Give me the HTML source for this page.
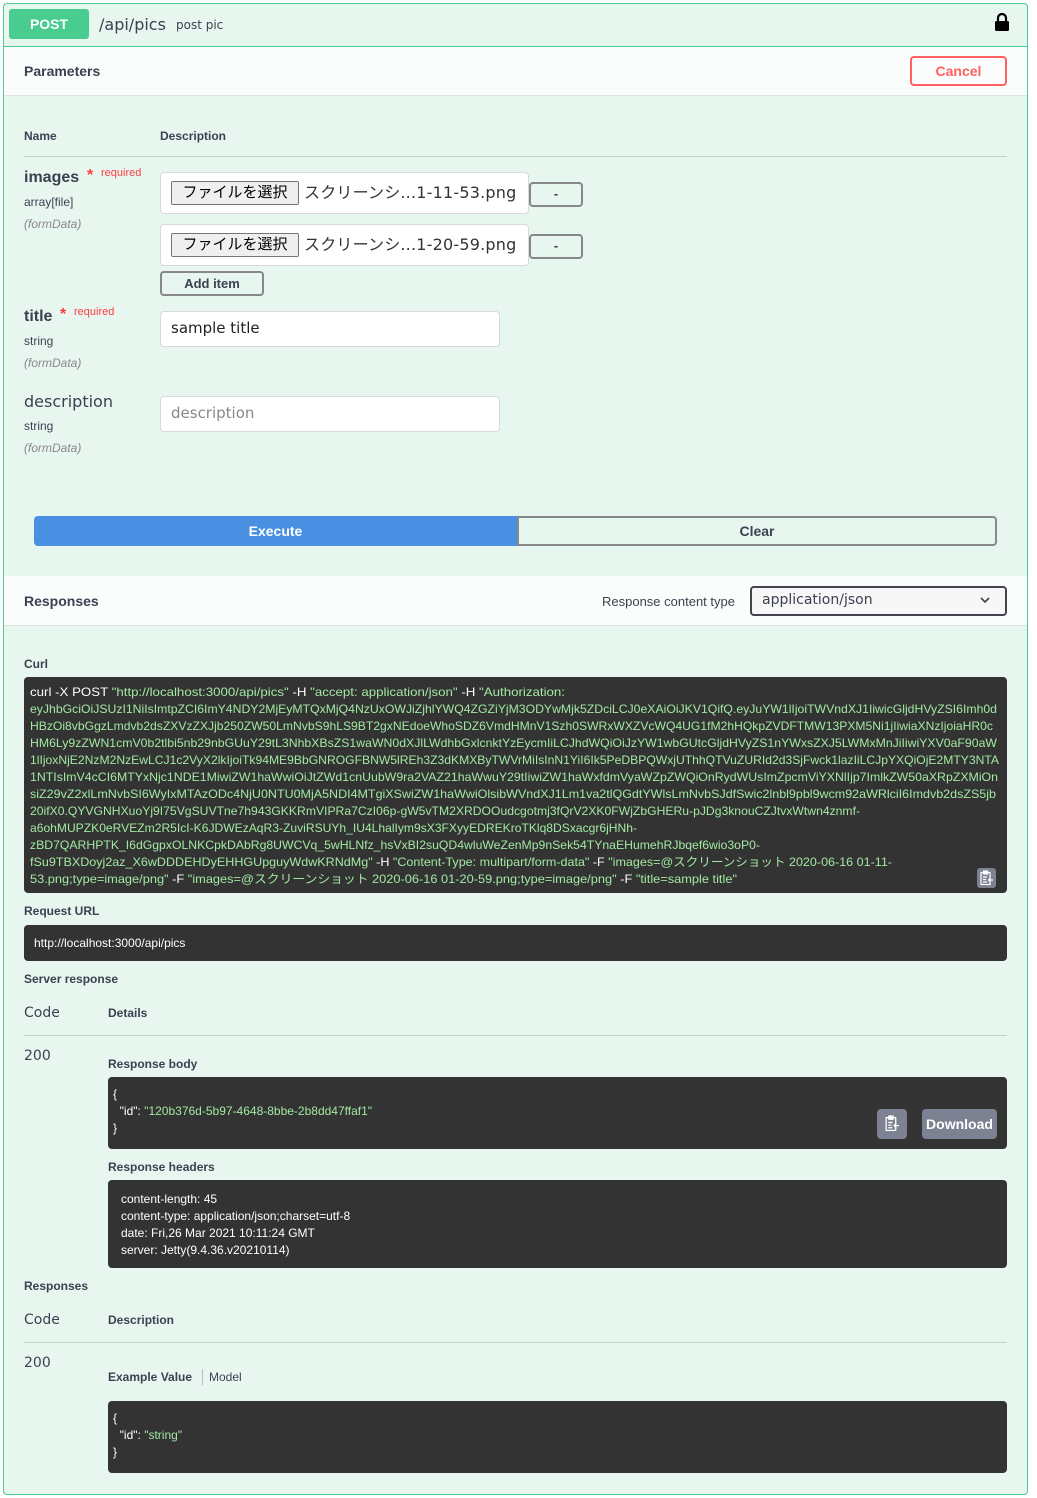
<!DOCTYPE html>
<html><head><meta charset="utf-8"><style>
*{margin:0;padding:0;box-sizing:border-box}
body{width:1037px;height:1498px;background:#fff;position:relative;overflow:hidden;font-family:"Liberation Sans","Noto Sans CJK JP",sans-serif;color:#3b4151}
.a{position:absolute}
.t{position:absolute;white-space:nowrap;line-height:1}
.b{font-weight:bold}
.dv{font-family:"DejaVu Sans","Noto Sans CJK JP",sans-serif}
.dark{position:absolute;background:#333;border-radius:4px}
.inp{position:absolute;background:#fff;border:1px solid #d9d9d9;border-radius:4px}
.gbtn{position:absolute;border:2px solid #888;border-radius:4px;text-align:center;font-size:13px;font-weight:bold;color:#3b4151}
.line{position:absolute;height:1px;background:#c5d3cd}
</style></head><body>
<div class="a" style="left:3px;top:3px;width:1025px;height:1492px;border:1px solid #49cc90;border-radius:4px;background:#e8f6f0"></div>
<div class="a" style="left:4px;top:46px;width:1023px;height:1px;background:#49cc90"></div>
<div class="a" style="left:9px;top:9px;width:80px;height:30px;background:#49cc90;border-radius:3px;color:#fff;font-weight:bold;font-size:14px;text-align:center;line-height:30px">POST</div>
<div class="t dv" style="left:99px;top:17px;font-size:16px;color:#3b4151">/api/pics</div>
<div class="t dv" style="left:176px;top:19px;font-size:12px;color:#3b4151">post pic</div>
<svg class="a" style="left:994px;top:12px" width="16" height="20" viewBox="0 0 16 20"><path d="M4 9V6a4 4 0 0 1 8 0v3" fill="none" stroke="#000" stroke-width="2.2"/><rect x="1" y="9" width="14" height="10" rx="1.5" fill="#000"/></svg>
<div class="a" style="left:4px;top:47px;width:1023px;height:49px;background:#fbfdfc;border-bottom:1px solid #dde5e1"></div>
<div class="t b" style="left:24px;top:64px;font-size:14px">Parameters</div>
<div class="a" style="left:910px;top:56px;width:97px;height:30px;border:2px solid #ff6060;border-radius:4px;color:#ff6060;font-size:14px;font-weight:bold;text-align:center;line-height:26px">Cancel</div>
<div class="t b" style="left:24px;top:130px;font-size:12px">Name</div>
<div class="t b" style="left:160px;top:130px;font-size:12px">Description</div>
<div class="line" style="left:24px;top:156px;width:983px"></div>
<div class="t b" style="left:24px;top:170px;font-size:16px">images</div>
<div class="t b" style="left:87px;top:168px;font-size:16px;color:#f93e3e">*</div>
<div class="t" style="left:101px;top:168px;font-size:11px;color:#f93e3e">required</div>
<div class="t" style="left:24px;top:196px;font-size:12px">array[file]</div>
<div class="t" style="left:24px;top:218px;font-size:12px;font-style:italic;color:#888">(formData)</div>
<div class="inp" style="left:160px;top:172px;width:369px;height:42px"></div>
<div class="a" style="left:171px;top:181px;width:128px;height:24px;background:#efefef;border:1px solid #767676;border-radius:2px;font-size:15px;line-height:22px;text-align:center;color:#000">ファイルを選択</div>
<div class="t dv" style="left:304px;top:185px;font-size:16px;color:#333;letter-spacing:0.2px">スクリーンシ...1-11-53.png</div>
<div class="gbtn" style="left:529px;top:182px;width:54px;height:25px;line-height:20px">-</div>
<div class="inp" style="left:160px;top:224px;width:369px;height:42px"></div>
<div class="a" style="left:171px;top:233px;width:128px;height:24px;background:#efefef;border:1px solid #767676;border-radius:2px;font-size:15px;line-height:22px;text-align:center;color:#000">ファイルを選択</div>
<div class="t dv" style="left:304px;top:237px;font-size:16px;color:#333;letter-spacing:0.2px">スクリーンシ...1-20-59.png</div>
<div class="gbtn" style="left:529px;top:234px;width:54px;height:25px;line-height:20px">-</div>
<div class="gbtn" style="left:160px;top:271px;width:104px;height:25px;line-height:21px">Add item</div>
<div class="t b" style="left:24px;top:309px;font-size:16px">title</div>
<div class="t b" style="left:60px;top:307px;font-size:16px;color:#f93e3e">*</div>
<div class="t" style="left:74px;top:307px;font-size:11px;color:#f93e3e">required</div>
<div class="t" style="left:24px;top:335px;font-size:12px">string</div>
<div class="t" style="left:24px;top:357px;font-size:12px;font-style:italic;color:#888">(formData)</div>
<div class="inp" style="left:160px;top:311px;width:340px;height:36px"></div>
<div class="t dv" style="left:171px;top:321px;font-size:15px;color:#222">sample title</div>
<div class="t dv" style="left:24px;top:394px;font-size:16px">description</div>
<div class="t" style="left:24px;top:420px;font-size:12px">string</div>
<div class="t" style="left:24px;top:442px;font-size:12px;font-style:italic;color:#888">(formData)</div>
<div class="inp" style="left:160px;top:396px;width:340px;height:36px"></div>
<div class="t dv" style="left:171px;top:406px;font-size:15px;color:#888">description</div>
<div class="a" style="left:34px;top:516px;width:483px;height:30px;background:#4990e2;border-radius:4px 0 0 4px;color:#fff;font-size:14px;font-weight:bold;text-align:center;line-height:30px">Execute</div>
<div class="a" style="left:517px;top:516px;width:480px;height:30px;border:2px solid #888;border-radius:0 4px 4px 0;font-size:14px;font-weight:bold;text-align:center;line-height:26px">Clear</div>
<div class="a" style="left:4px;top:576px;width:1023px;height:50px;background:#fbfdfc;border-bottom:1px solid #dde5e1"></div>
<div class="t b" style="left:24px;top:594px;font-size:14px">Responses</div>
<div class="t" style="left:602px;top:595px;font-size:13px">Response content type</div>
<div class="a" style="left:750px;top:586px;width:257px;height:30px;border:2px solid #41444e;border-radius:4px;background:#f7f7f7"></div>
<div class="t dv" style="left:762px;top:593px;font-size:14px">application/json</div>
<svg class="a" style="left:980px;top:597px" width="10" height="7" viewBox="0 0 10 7"><path d="M1 1l4 4 4-4" fill="none" stroke="#3b4151" stroke-width="1.6"/></svg>
<div class="t b" style="left:24px;top:658px;font-size:12px">Curl</div>
<div class="dark" style="left:24px;top:677px;width:983px;height:216px"></div>
<svg class="a" style="left:24px;top:677px" width="983" height="216" font-family="Liberation Sans, Noto Sans CJK JP, sans-serif" font-size="12" fill="#a2e8a2">
<text x="6" y="19" textLength="535" lengthAdjust="spacingAndGlyphs"><tspan fill="#fff">curl -X POST </tspan>"http://localhost:3000/api/pics"<tspan fill="#fff"> -H </tspan> "accept: application/json"<tspan fill="#fff"> -H </tspan> "Authorization:</text>
<text x="6" y="36" textLength="967" lengthAdjust="spacingAndGlyphs">eyJhbGciOiJSUzI1NiIsImtpZCI6ImY4NDY2MjEyMTQxMjQ4NzUxOWJiZjhlYWQ4ZGZiYjM3ODYwMjk5ZDciLCJ0eXAiOiJKV1QifQ.eyJuYW1lIjoiTWVndXJ1IiwicGljdHVyZSI6Imh0d</text>
<text x="6" y="53" textLength="963" lengthAdjust="spacingAndGlyphs">HBzOi8vbGgzLmdvb2dsZXVzZXJjb250ZW50LmNvbS9hLS9BT2gxNEdoeWhoSDZ6VmdHMnV1Szh0SWRxWXZVcWQ4UG1fM2hHQkpZVDFTMW13PXM5Ni1jIiwiaXNzIjoiaHR0c</text>
<text x="6" y="70" textLength="967" lengthAdjust="spacingAndGlyphs">HM6Ly9zZWN1cmV0b2tlbi5nb29nbGUuY29tL3NhbXBsZS1waWN0dXJlLWdhbGxlcnktYzEycmIiLCJhdWQiOiJzYW1wbGUtcGljdHVyZS1nYWxsZXJ5LWMxMnJiIiwiYXV0aF90aW</text>
<text x="6" y="87" textLength="969" lengthAdjust="spacingAndGlyphs">1lIjoxNjE2NzM2NzEwLCJ1c2VyX2lkIjoiTk94ME9BbGNROGFBNW5lREh3Z3dKMXByTWVrMiIsInN1YiI6Ik5PeDBPQWxjUThhQTVuZURId2d3SjFwck1lazIiLCJpYXQiOjE2MTY3NTA</text>
<text x="6" y="104" textLength="968" lengthAdjust="spacingAndGlyphs">1NTIsImV4cCI6MTYxNjc1NDE1MiwiZW1haWwiOiJtZWd1cnUubW9ra2VAZ21haWwuY29tIiwiZW1haWxfdmVyaWZpZWQiOnRydWUsImZpcmViYXNlIjp7ImlkZW50aXRpZXMiOn</text>
<text x="6" y="121" textLength="966" lengthAdjust="spacingAndGlyphs">siZ29vZ2xlLmNvbSI6WyIxMTAzODc4NjU0NTU0MjA5NDI4MTgiXSwiZW1haWwiOlsibWVndXJ1Lm1va2tlQGdtYWlsLmNvbSJdfSwic2lnbl9pbl9wcm92aWRlciI6Imdvb2dsZS5jb</text>
<text x="6" y="138" textLength="830" lengthAdjust="spacingAndGlyphs">20ifX0.QYVGNHXuoYj9I75VgSUVTne7h943GKKRmVIPRa7CzI06p-gW5vTM2XRDOOudcgotmj3fQrV2XK0FWjZbGHERu-pJDg3knouCZJtvxWtwn4znmf-</text>
<text x="6" y="155" textLength="607" lengthAdjust="spacingAndGlyphs">a6ohMUPZK0eRVEZm2R5IcI-K6JDWEzAqR3-ZuviRSUYh_IU4LhalIym9sX3FXyyEDREKroTKlq8DSxacgr6jHNh-</text>
<text x="6" y="172" textLength="730" lengthAdjust="spacingAndGlyphs">zBD7QARHPTK_I6dGgpxOLNKCpkDAbRg8UWCVq_5wHLNfz_hsVxBI2suQD4wluWeZenMp9nSek54TYnaEHumehRJbqef6wio3oP0-</text>
<text x="6" y="189" textLength="862" lengthAdjust="spacingAndGlyphs">fSu9TBXDoyj2az_X6wDDDEHDyEHHGUpguyWdwKRNdMg"<tspan fill="#fff"> -H </tspan> "Content-Type: multipart/form-data"<tspan fill="#fff"> -F </tspan>"images=@スクリーンショット 2020-06-16 01-11-</text>
<text x="6" y="206" textLength="707" lengthAdjust="spacingAndGlyphs">53.png;type=image/png"<tspan fill="#fff"> -F </tspan>"images=@スクリーンショット 2020-06-16 01-20-59.png;type=image/png"<tspan fill="#fff"> -F </tspan>"title=sample title"</text>
</svg>
<div class="a" style="left:977px;top:868px;width:19px;height:20px;background:#7d8293;border-radius:3px"></div>
<svg class="a" style="left:979px;top:870px" width="15" height="16" viewBox="0 0 15 16" fill="none" stroke="#fff" stroke-width="1.2"><rect x="2" y="2.5" width="9" height="12"/><rect x="4.5" y="1" width="4" height="3" fill="#fff"/><path d="M4 7h4M4 9.5h3M4 12h4M9 10h5M11.5 8l-2 2 2 2"/></svg>
<div class="t b" style="left:24px;top:905px;font-size:12px">Request URL</div>
<div class="dark" style="left:24px;top:925px;width:983px;height:36px"></div>
<div class="t" style="left:34px;top:937px;font-size:12px;color:#fff">http://localhost:3000/api/pics</div>
<div class="t b" style="left:24px;top:973px;font-size:12px">Server response</div>
<div class="t b dv" style="left:24px;top:1006px;font-size:14px;font-weight:normal">Code</div>
<div class="t b" style="left:108px;top:1007px;font-size:12px">Details</div>
<div class="line" style="left:24px;top:1035px;width:983px"></div>
<div class="t dv" style="left:24px;top:1049px;font-size:14px">200</div>
<div class="t b" style="left:108px;top:1058px;font-size:12px">Response body</div>
<div class="dark" style="left:108px;top:1077px;width:899px;height:72px"></div>
<div class="t" style="left:113px;top:1086px;font-size:12px;color:#fff;line-height:17px">{<br>&nbsp;&nbsp;"id": <span style="color:#a2e8a2">"120b376d-5b97-4648-8bbe-2b8dd47ffaf1"</span><br>}</div>
<div class="a" style="left:877px;top:1109px;width:30px;height:30px;background:#7d8293;border-radius:4px"></div>
<svg class="a" style="left:884px;top:1115px" width="16" height="17" viewBox="0 0 15 16" fill="none" stroke="#fff" stroke-width="1.2"><rect x="2" y="2.5" width="9" height="12"/><rect x="4.5" y="1" width="4" height="3" fill="#fff"/><path d="M4 7h4M4 9.5h3M4 12h4M9 10h5M11.5 8l-2 2 2 2"/></svg>
<div class="a" style="left:922px;top:1109px;width:75px;height:30px;background:#7d8293;border-radius:4px;color:#fff;font-size:14px;font-weight:bold;text-align:center;line-height:30px">Download</div>
<div class="t b" style="left:108px;top:1161px;font-size:12px">Response headers</div>
<div class="dark" style="left:108px;top:1180px;width:899px;height:88px"></div>
<div class="t" style="left:121px;top:1191px;font-size:12px;color:#fff;line-height:17px">content-length: 45<br>content-type: application/json;charset=utf-8<br>date: Fri,26 Mar 2021 10:11:24 GMT<br>server: Jetty(9.4.36.v20210114)</div>
<div class="t b" style="left:24px;top:1280px;font-size:12px">Responses</div>
<div class="t dv" style="left:24px;top:1313px;font-size:14px">Code</div>
<div class="t b" style="left:108px;top:1314px;font-size:12px">Description</div>
<div class="line" style="left:24px;top:1342px;width:983px"></div>
<div class="t dv" style="left:24px;top:1356px;font-size:14px">200</div>
<div class="t b" style="left:108px;top:1371px;font-size:12px">Example Value</div>
<div class="a" style="left:202px;top:1369px;width:1px;height:16px;background:#bbb"></div>
<div class="t" style="left:209px;top:1371px;font-size:12px">Model</div>
<div class="dark" style="left:108px;top:1401px;width:899px;height:72px"></div>
<div class="t" style="left:113px;top:1410px;font-size:12px;color:#fff;line-height:17px">{<br>&nbsp;&nbsp;"id": <span style="color:#a2e8a2">"string"</span><br>}</div>
</body></html>
